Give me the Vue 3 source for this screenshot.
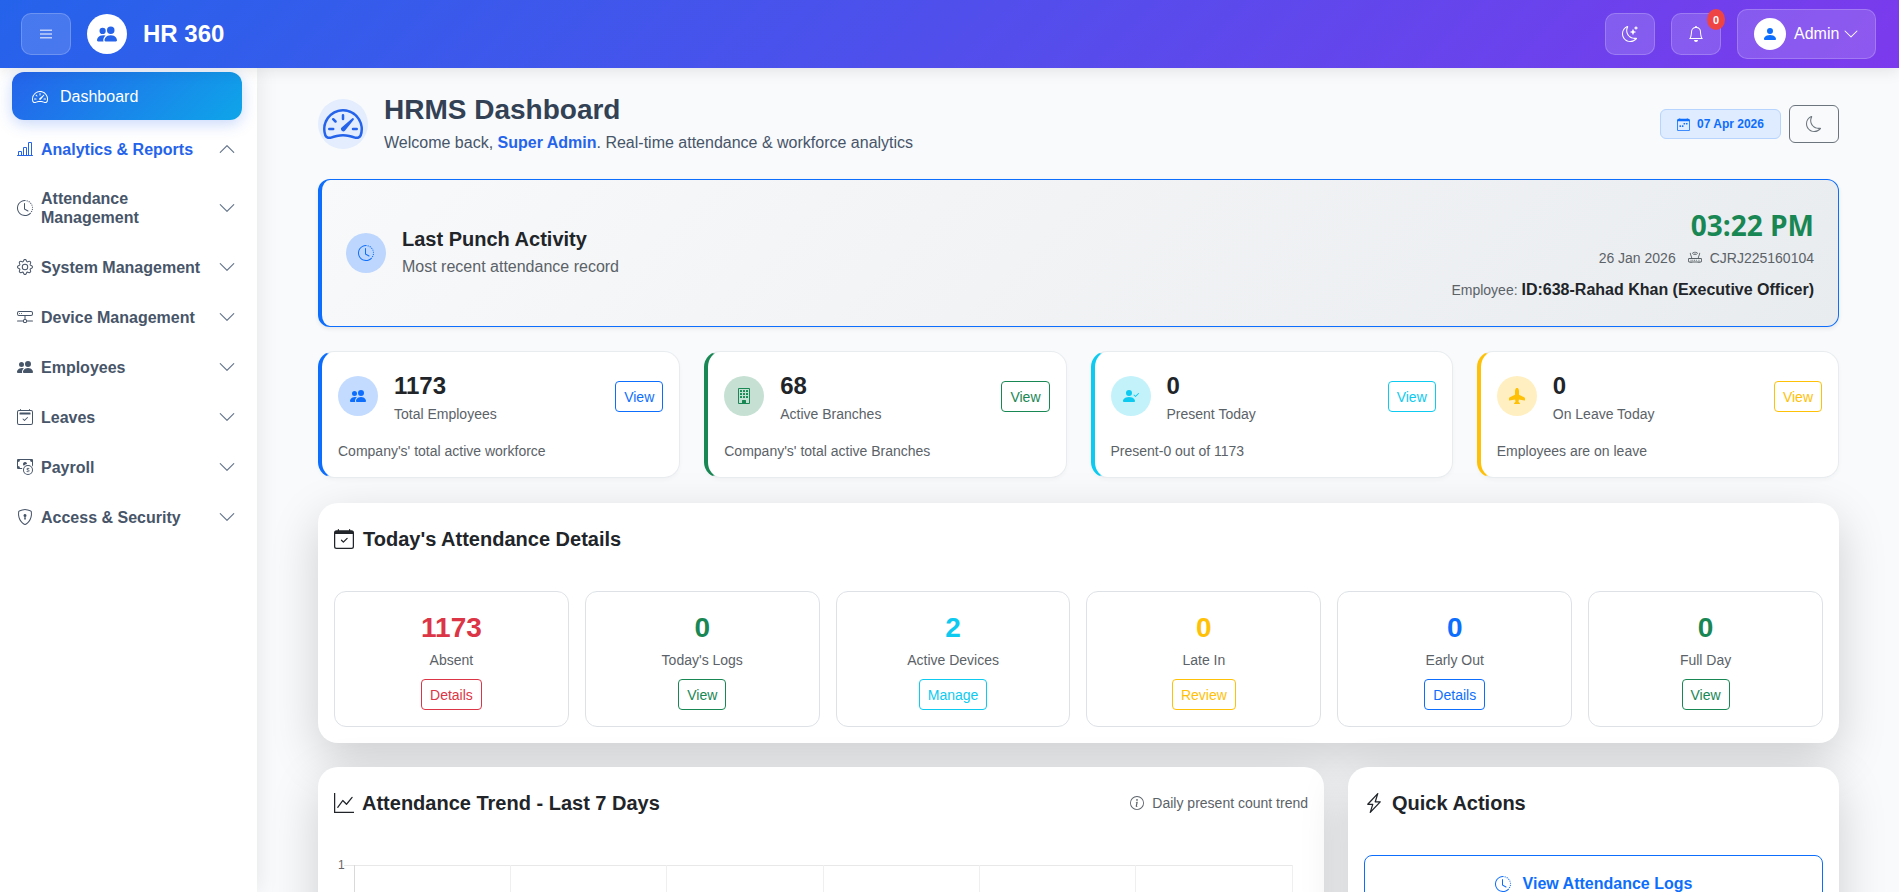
<template>
  <div class="shell">
    <header class="topbar">
      <div class="brand">
        <button class="glass-btn"><BiIcon name="bars" class="ic-16 bars" /></button>
        <span class="logo"><BiIcon name="people" class="ic-20" /></span>
        <span class="brand-name">HR 360</span>
      </div>
      <div class="top-actions">
        <button class="glass-btn"><BiIcon name="moonStars" class="ic-16" /></button>
        <button class="glass-btn bell">
          <BiIcon name="bell" class="ic-16" />
          <span class="badge">0</span>
        </button>
        <button class="glass-btn admin">
          <span class="avatar"><BiIcon name="person" class="ic-16" /></span>
          <span>Admin</span>
          <BiIcon name="chevronDown" class="ic-16 admin-chevron" />
        </button>
      </div>
    </header>

    <div class="body-row">
      <aside class="sidebar">
        <a class="nav-active">
          <BiIcon name="speedometer" class="ic-16" />
          <span>Dashboard</span>
        </a>
        <a v-for="item in menu" :key="item.label" class="nav-item" :class="{ open: item.open }">
          <BiIcon :name="item.icon" class="ic-16" />
          <span class="nav-label">{{ item.label }}</span>
          <BiIcon :name="item.open ? 'chevronUp' : 'chevronDown'" class="ic-18 nav-chevron" />
        </a>
      </aside>

      <main class="content">
        <section class="page-head">
          <div class="page-title">
            <span class="title-circle"><BiIcon name="speedometer" class="ic-40" /></span>
            <div class="title-text">
              <h1>HRMS Dashboard</h1>
              <p>Welcome back, <strong>Super Admin</strong>. Real-time attendance &amp; workforce analytics</p>
            </div>
          </div>
          <div class="page-tools">
            <span class="date-pill"><BiIcon name="calendarWeek" class="ic-12" />07 Apr 2026</span>
            <button class="moon-btn"><BiIcon name="moon" class="ic-16" /></button>
          </div>
        </section>

        <section class="punch">
          <div class="punch-left">
            <span class="circle soft-blue"><BiIcon name="clockHistory" class="ic-16" /></span>
            <div class="title-text">
              <h2>Last Punch Activity</h2>
              <p>Most recent attendance record</p>
            </div>
          </div>
          <div class="punch-right">
            <div class="punch-time">03:22 PM</div>
            <div class="punch-meta">
              <span>26 Jan 2026</span>
              <BiIcon name="router" class="ic-14 router" />
              <span>CJRJ225160104</span>
            </div>
            <div class="punch-emp">Employee: <strong>ID:638-Rahad Khan (Executive Officer)</strong></div>
          </div>
        </section>

        <section class="stats">
          <div v-for="s in stats" :key="s.label" class="stat-card" :class="s.tone">
            <div class="stat-top">
              <span class="circle stat-icon"><BiIcon :name="s.icon" class="ic-16" /></span>
              <div class="stat-text">
                <div class="stat-num">{{ s.value }}</div>
                <div class="stat-label">{{ s.label }}</div>
              </div>
              <button class="btn-line stat-btn">View</button>
            </div>
            <p class="stat-foot">{{ s.foot }}</p>
          </div>
        </section>

        <section class="panel today">
          <h3 class="panel-title"><BiIcon name="calendarCheck" class="ic-20" />Today's Attendance Details</h3>
          <div class="today-grid">
            <div v-for="t in today" :key="t.label" class="today-item" :class="t.tone">
              <div class="today-num">{{ t.value }}</div>
              <div class="today-label">{{ t.label }}</div>
              <button class="btn-line">{{ t.action }}</button>
            </div>
          </div>
        </section>

        <section class="bottom-row">
          <div class="panel trend">
            <div class="trend-head">
              <h3 class="panel-title tight"><BiIcon name="graphUp" class="ic-20" />Attendance Trend - Last 7 Days</h3>
              <span class="trend-note"><BiIcon name="info" class="ic-14" />Daily present count trend</span>
            </div>
            <svg class="trend-chart" viewBox="0 0 974 200" width="974" height="200">
              <text x="4" y="14" class="tick">1</text>
              <line x1="10" y1="10.5" x2="959" y2="10.5" stroke="#e8e8e8" />
              <line
                v-for="(x, i) in gridX"
                :key="x"
                :x1="x"
                y1="10"
                :x2="x"
                y2="200"
                :stroke="i === 0 ? '#d9d9d9' : '#efefef'"
              />
            </svg>
          </div>
          <div class="panel quick">
            <h3 class="panel-title tight"><BiIcon name="lightning" class="ic-20" />Quick Actions</h3>
            <button class="quick-btn"><BiIcon name="clockHistory" class="ic-16" />View Attendance Logs</button>
          </div>
        </section>
      </main>
    </div>
  </div>
</template>

<script setup>
import { h } from 'vue'

const icons = {
  bars: 'M2 3.5h12v1.6H2zM2 7.2h12v1.6H2zM2 10.9h12v1.6H2z',
  people: 'M7 14s-1 0-1-1 1-4 5-4 5 3 5 4-1 1-1 1zm4-6a3 3 0 1 0 0-6 3 3 0 0 0 0 6m-5.784 6A2.24 2.24 0 0 1 5 13c0-1.355.68-2.75 1.936-3.72A6.3 6.3 0 0 0 5 9c-4 0-5 3-5 4s1 1 1 1zM4.5 8a2.5 2.5 0 1 0 0-5 2.5 2.5 0 0 0 0 5',
  speedometer: 'M8 4a.5.5 0 0 1 .5.5V6a.5.5 0 0 1-1 0V4.5A.5.5 0 0 1 8 4M3.732 5.732a.5.5 0 0 1 .707 0l.915.914a.5.5 0 1 1-.708.708l-.914-.915a.5.5 0 0 1 0-.707M2 10a.5.5 0 0 1 .5-.5h1.586a.5.5 0 0 1 0 1H2.5A.5.5 0 0 1 2 10m9.5 0a.5.5 0 0 1 .5-.5h1.5a.5.5 0 0 1 0 1H12a.5.5 0 0 1-.5-.5m.754-4.246a.39.39 0 0 0-.527-.02L7.547 9.31a.91.91 0 1 0 1.302 1.258l3.434-4.297a.39.39 0 0 0-.029-.518zM0 10a8 8 0 1 1 15.547 2.661c-.442 1.253-1.845 1.602-2.932 1.25C11.309 13.488 9.475 13 8 13c-1.474 0-3.31.488-4.615.911-1.087.352-2.49.003-2.932-1.25A8 8 0 0 1 0 10m8-7a7 7 0 0 0-6.603 9.329c.203.575.923.876 1.68.63C4.397 12.533 6.358 12 8 12s3.604.532 4.923.96c.757.245 1.477-.056 1.68-.631A7 7 0 0 0 8 3',
  clockHistory: 'M8.515 1.019A7 7 0 0 0 8 1V0a8 8 0 0 1 .589.022zm2.004.45a7 7 0 0 0-.985-.299l.219-.976q.576.129 1.126.342zm1.37.71a7 7 0 0 0-.439-.27l.493-.87a8 8 0 0 1 .979.654l-.615.789a7 7 0 0 0-.418-.302zm1.834 1.79a7 7 0 0 0-.653-.796l.724-.69q.406.429.747.91zm.744 1.352a7 7 0 0 0-.214-.468l.893-.45a8 8 0 0 1 .45 1.088l-.95.313a7 7 0 0 0-.179-.483m.53 2.507a7 7 0 0 0-.1-1.025l.985-.17q.1.58.116 1.17zm-.131 1.538q.05-.254.081-.51l.993.123a8 8 0 0 1-.23 1.155l-.964-.267q.069-.247.12-.501m-.952 2.379q.276-.436.486-.908l.914.405q-.24.54-.555 1.038zm-.964 1.205q.183-.183.35-.378l.758.653a8 8 0 0 1-.401.432zM8 1a7 7 0 1 0 4.95 11.95l.707.707A8.001 8.001 0 1 1 8 0zM7.5 3a.5.5 0 0 1 .5.5v5.21l3.248 1.856a.5.5 0 0 1-.496.868l-3.5-2A.5.5 0 0 1 7 9V3.5a.5.5 0 0 1 .5-.5',
  barChart: 'M11 2a1 1 0 0 1 1-1h2a1 1 0 0 1 1 1v12h.5a.5.5 0 0 1 0 1H.5a.5.5 0 0 1 0-1H1v-3a1 1 0 0 1 1-1h2a1 1 0 0 1 1 1v3h1V7a1 1 0 0 1 1-1h2a1 1 0 0 1 1 1v7h1zm1 12h2V2h-2zm-3 0V7H7v7zm-5 0v-3H2v3z',
  chevronDown: 'M1.646 4.646a.5.5 0 0 1 .708 0L8 10.293l5.646-5.647a.5.5 0 0 1 .708.708l-6 6a.5.5 0 0 1-.708 0l-6-6a.5.5 0 0 1 0-.708',
  chevronUp: 'M7.646 4.646a.5.5 0 0 1 .708 0l6 6a.5.5 0 0 1-.708.708L8 5.707l-5.646 5.647a.5.5 0 0 1-.708-.708z',
  gear: 'M8 4.754a3.246 3.246 0 1 0 0 6.492 3.246 3.246 0 0 0 0-6.492M5.754 8a2.246 2.246 0 1 1 4.492 0 2.246 2.246 0 0 1-4.492 0M9.796 1.343c-.527-1.79-3.065-1.79-3.592 0l-.094.319a.873.873 0 0 1-1.255.52l-.292-.16c-1.64-.892-3.433.902-2.54 2.541l.159.292a.873.873 0 0 1-.52 1.255l-.319.094c-1.79.527-1.79 3.065 0 3.592l.319.094a.873.873 0 0 1 .52 1.255l-.16.292c-.892 1.64.901 3.434 2.541 2.54l.292-.159a.873.873 0 0 1 1.255.52l.094.319c.527 1.79 3.065 1.79 3.592 0l.094-.319a.873.873 0 0 1 1.255-.52l.292.16c1.64.893 3.434-.902 2.54-2.541l-.159-.292a.873.873 0 0 1 .52-1.255l.319-.094c1.79-.527 1.79-3.065 0-3.592l-.319-.094a.873.873 0 0 1-.52-1.255l.16-.292c.893-1.64-.902-3.433-2.541-2.54l-.292.159a.873.873 0 0 1-1.255-.52zm-2.633.283c.246-.835 1.428-.835 1.674 0l.094.319a1.873 1.873 0 0 0 2.693 1.115l.291-.16c.764-.415 1.6.42 1.184 1.185l-.159.292a1.873 1.873 0 0 0 1.116 2.692l.318.094c.835.246.835 1.428 0 1.674l-.319.094a1.873 1.873 0 0 0-1.115 2.693l.16.291c.415.764-.42 1.6-1.185 1.184l-.291-.159a1.873 1.873 0 0 0-2.693 1.116l-.094.318c-.246.835-1.428.835-1.674 0l-.094-.319a1.873 1.873 0 0 0-2.692-1.115l-.292.16c-.764.415-1.6-.42-1.184-1.185l.159-.291A1.873 1.873 0 0 0 1.945 8.93l-.319-.094c-.835-.246-.835-1.428 0-1.674l.319-.094A1.873 1.873 0 0 0 3.06 4.377l-.16-.292c-.415-.764.42-1.6 1.185-1.184l.292.159a1.873 1.873 0 0 0 2.692-1.115z',
  hddNetwork: 'M4.5 5a.5.5 0 1 0 0-1 .5.5 0 0 0 0 1M3 4.5a.5.5 0 1 1-1 0 .5.5 0 0 1 1 0M0 4a2 2 0 0 1 2-2h12a2 2 0 0 1 2 2v1a2 2 0 0 1-2 2H8.5v3a1.5 1.5 0 0 1 1.5 1.5h5.5a.5.5 0 0 1 0 1H10A1.5 1.5 0 0 1 8.5 14h-1A1.5 1.5 0 0 1 6 12.5H.5a.5.5 0 0 1 0-1H6A1.5 1.5 0 0 1 7.5 10V7H2a2 2 0 0 1-2-2zm1 0v1a1 1 0 0 0 1 1h12a1 1 0 0 0 1-1V4a1 1 0 0 0-1-1H2a1 1 0 0 0-1 1m6 7.5v1a.5.5 0 0 0 .5.5h1a.5.5 0 0 0 .5-.5v-1a.5.5 0 0 0-.5-.5h-1a.5.5 0 0 0-.5.5',
  calendar2Check: 'M10.854 8.146a.5.5 0 0 1 0 .708l-3 3a.5.5 0 0 1-.708 0l-1.5-1.5a.5.5 0 0 1 .708-.708L7.5 10.793l2.646-2.647a.5.5 0 0 1 .708 0M3.5 0a.5.5 0 0 1 .5.5V1h8V.5a.5.5 0 0 1 1 0V1h1a2 2 0 0 1 2 2v11a2 2 0 0 1-2 2H2a2 2 0 0 1-2-2V3a2 2 0 0 1 2-2h1V.5a.5.5 0 0 1 .5-.5M2 2a1 1 0 0 0-1 1v11a1 1 0 0 0 1 1h12a1 1 0 0 0 1-1V3a1 1 0 0 0-1-1zM2.5 4a.5.5 0 0 1 .5-.5h10a.5.5 0 0 1 .5.5v1a.5.5 0 0 1-.5.5H3a.5.5 0 0 1-.5-.5z',
  calendarCheck: 'M10.854 7.146a.5.5 0 0 1 0 .708l-3 3a.5.5 0 0 1-.708 0l-1.5-1.5a.5.5 0 1 1 .708-.708L7.5 9.793l2.646-2.647a.5.5 0 0 1 .708 0M3.5 0a.5.5 0 0 1 .5.5V1h8V.5a.5.5 0 0 1 1 0V1h1a2 2 0 0 1 2 2v11a2 2 0 0 1-2 2H2a2 2 0 0 1-2-2V3a2 2 0 0 1 2-2h1V.5a.5.5 0 0 1 .5-.5M1 4v10a1 1 0 0 0 1 1h12a1 1 0 0 0 1-1V4z',
  calendarWeek: 'M11 6.5a.5.5 0 0 1 .5-.5h1a.5.5 0 0 1 .5.5v1a.5.5 0 0 1-.5.5h-1a.5.5 0 0 1-.5-.5zm-3 0a.5.5 0 0 1 .5-.5h1a.5.5 0 0 1 .5.5v1a.5.5 0 0 1-.5.5h-1a.5.5 0 0 1-.5-.5zm-5 3a.5.5 0 0 1 .5-.5h1a.5.5 0 0 1 .5.5v1a.5.5 0 0 1-.5.5h-1a.5.5 0 0 1-.5-.5zm3 0a.5.5 0 0 1 .5-.5h1a.5.5 0 0 1 .5.5v1a.5.5 0 0 1-.5.5h-1a.5.5 0 0 1-.5-.5zM3.5 0a.5.5 0 0 1 .5.5V1h8V.5a.5.5 0 0 1 1 0V1h1a2 2 0 0 1 2 2v11a2 2 0 0 1-2 2H2a2 2 0 0 1-2-2V3a2 2 0 0 1 2-2h1V.5a.5.5 0 0 1 .5-.5M1 4v10a1 1 0 0 0 1 1h12a1 1 0 0 0 1-1V4z',
  cashCoin: 'M11 15a4 4 0 1 0 0-8 4 4 0 0 0 0 8m5-4a5 5 0 1 1-10 0 5 5 0 0 1 10 0M9.438 11.944c.047.596.518 1.06 1.363 1.116v.44h.375v-.443c.875-.061 1.386-.529 1.386-1.207 0-.618-.39-.936-1.09-1.1l-.296-.07v-1.2c.376.043.614.248.671.532h.658c-.047-.575-.54-1.024-1.329-1.073V8.5h-.375v.45c-.747.073-1.255.522-1.255 1.158 0 .562.378.92 1.007 1.066l.248.061v1.272c-.384-.058-.639-.27-.696-.563h-.668zm1.36-1.354c-.369-.085-.569-.26-.569-.522 0-.294.216-.514.572-.578v1.1zm.432.746c.449.104.655.272.655.569 0 .339-.257.571-.709.614v-1.195zM1 0a1 1 0 0 0-1 1v8a1 1 0 0 0 1 1h4.083q.088-.517.258-1H3a2 2 0 0 0-2-2V3a2 2 0 0 0 2-2h10a2 2 0 0 0 2 2v3.528c.38.34.717.728 1 1.154V1a1 1 0 0 0-1-1zM9.998 5.083 10 5a2 2 0 1 0-3.132 1.65 6 6 0 0 1 3.13-1.567',
  shieldLock: 'M5.338 1.59a61 61 0 0 0-2.837.856.48.48 0 0 0-.328.39c-.554 4.157.726 7.19 2.253 9.188a10.7 10.7 0 0 0 2.287 2.233c.346.244.652.42.893.533q.18.085.293.118a1 1 0 0 0 .101.025 1 1 0 0 0 .1-.025q.114-.034.294-.118c.24-.113.547-.29.893-.533a10.7 10.7 0 0 0 2.287-2.233c1.527-1.997 2.807-5.031 2.253-9.188a.48.48 0 0 0-.328-.39c-.651-.213-1.75-.56-2.837-.855C9.552 1.29 8.531 1.067 8 1.067c-.53 0-1.552.223-2.662.524zM5.072.56C6.157.265 7.31 0 8 0s1.843.265 2.928.56c1.11.3 2.229.655 2.887.87a1.54 1.54 0 0 1 1.044 1.262c.596 4.477-.787 7.795-2.465 9.99a11.8 11.8 0 0 1-2.517 2.453 7 7 0 0 1-1.048.625c-.28.132-.581.24-.829.24s-.548-.108-.829-.24a7 7 0 0 1-1.048-.625 11.8 11.8 0 0 1-2.517-2.453C1.928 10.487.545 7.169 1.141 2.692A1.54 1.54 0 0 1 2.185 1.43 63 63 0 0 1 5.072.56M9.5 6.5a1.5 1.5 0 0 1-1 1.415l.385 1.99a.5.5 0 0 1-.491.595h-.788a.5.5 0 0 1-.49-.595l.384-1.99a1.5 1.5 0 1 1 2-1.415',
  moon: 'M6 .278a.77.77 0 0 1 .08.858 7.2 7.2 0 0 0-.878 3.46c0 4.021 3.278 7.277 7.318 7.277q.792-.001 1.533-.16a.79.79 0 0 1 .81.316.73.73 0 0 1-.031.893A8.35 8.35 0 0 1 8.344 16C3.734 16 0 12.286 0 7.71 0 4.266 2.114 1.312 5.124.06A.75.75 0 0 1 6 .278M4.858 1.311A7.27 7.27 0 0 0 1.025 7.71c0 4.02 3.279 7.276 7.319 7.276a7.32 7.32 0 0 0 5.205-2.162q-.506.063-1.029.063c-4.61 0-8.343-3.714-8.343-8.29 0-1.167.242-2.278.681-3.286',
  moonStars: 'M6 .278a.77.77 0 0 1 .08.858 7.2 7.2 0 0 0-.878 3.46c0 4.021 3.278 7.277 7.318 7.277q.792-.001 1.533-.16a.79.79 0 0 1 .81.316.73.73 0 0 1-.031.893A8.35 8.35 0 0 1 8.344 16C3.734 16 0 12.286 0 7.71 0 4.266 2.114 1.312 5.124.06A.75.75 0 0 1 6 .278M4.858 1.311A7.27 7.27 0 0 0 1.025 7.71c0 4.02 3.279 7.276 7.319 7.276a7.32 7.32 0 0 0 5.205-2.162q-.506.063-1.029.063c-4.61 0-8.343-3.714-8.343-8.29 0-1.167.242-2.278.681-3.286M10.794 3.148a.217.217 0 0 1 .412 0l.387 1.162c.173.518.579.924 1.097 1.097l1.162.387a.217.217 0 0 1 0 .412l-1.162.387a1.73 1.73 0 0 0-1.097 1.097l-.387 1.162a.217.217 0 0 1-.412 0l-.387-1.162A1.73 1.73 0 0 0 9.31 6.593l-1.162-.387a.217.217 0 0 1 0-.412l1.162-.387a1.73 1.73 0 0 0 1.097-1.097zM13.863.099a.145.145 0 0 1 .274 0l.258.774c.115.346.386.617.732.732l.774.258a.145.145 0 0 1 0 .274l-.774.258a1.16 1.16 0 0 0-.732.732l-.258.774a.145.145 0 0 1-.274 0l-.258-.774a1.16 1.16 0 0 0-.732-.732l-.774-.258a.145.145 0 0 1 0-.274l.774-.258c.346-.115.617-.386.732-.732z',
  bell: 'M8 16a2 2 0 0 0 2-2H6a2 2 0 0 0 2 2M8 1.918l-.797.161A4 4 0 0 0 4 6c0 .628-.134 2.197-.459 3.742-.16.767-.376 1.566-.663 2.258h10.244c-.287-.692-.502-1.49-.663-2.258C12.134 8.197 12 6.628 12 6a4 4 0 0 0-3.203-3.92zM14.22 12c.223.447.481.801.78 1H1c.299-.199.557-.553.78-1C2.68 10.2 3 6.88 3 6c0-2.42 1.72-4.44 4.005-4.901a1 1 0 1 1 1.99 0A5 5 0 0 1 13 6c0 .88.32 4.2 1.22 6',
  person: 'M3 14s-1 0-1-1 1-4 6-4 6 3 6 4-1 1-1 1zm5-6a3 3 0 1 0 0-6 3 3 0 0 0 0 6',
  router: 'M5.525 3.025a3.5 3.5 0 0 1 4.95 0 .5.5 0 1 0 .707-.707 4.5 4.5 0 0 0-6.364 0 .5.5 0 0 0 .707.707M6.94 4.44a1.5 1.5 0 0 1 2.12 0 .5.5 0 0 0 .708-.708 2.5 2.5 0 0 0-3.536 0 .5.5 0 0 0 .707.707M2.974 2.342a.5.5 0 1 0-.948.316L3.806 8H1.5A1.5 1.5 0 0 0 0 9.5v2A1.5 1.5 0 0 0 1.5 13H2a.5.5 0 0 0 .5.5h2A.5.5 0 0 0 5 13h6a.5.5 0 0 0 .5.5h2a.5.5 0 0 0 .5-.5h.5a1.5 1.5 0 0 0 1.5-1.5v-2A1.5 1.5 0 0 0 14.5 8h-2.306l1.78-5.342a.5.5 0 1 0-.948-.316L11.14 8H4.86zM1.5 9h13a.5.5 0 0 1 .5.5v2a.5.5 0 0 1-.5.5h-13a.5.5 0 0 1-.5-.5v-2a.5.5 0 0 1 .5-.5M3 10h1v1H3zM5 10h1v1H5zM7 10h1v1H7zM9 10h1v1H9zM12 10h1v1h-1z',
  building: 'M4 2.5a.5.5 0 0 1 .5-.5h1a.5.5 0 0 1 .5.5v1a.5.5 0 0 1-.5.5h-1a.5.5 0 0 1-.5-.5zm3 0a.5.5 0 0 1 .5-.5h1a.5.5 0 0 1 .5.5v1a.5.5 0 0 1-.5.5h-1a.5.5 0 0 1-.5-.5zm3.5-.5a.5.5 0 0 0-.5.5v1a.5.5 0 0 0 .5.5h1a.5.5 0 0 0 .5-.5v-1a.5.5 0 0 0-.5-.5zM4 5.5a.5.5 0 0 1 .5-.5h1a.5.5 0 0 1 .5.5v1a.5.5 0 0 1-.5.5h-1a.5.5 0 0 1-.5-.5zM7.5 5a.5.5 0 0 0-.5.5v1a.5.5 0 0 0 .5.5h1a.5.5 0 0 0 .5-.5v-1a.5.5 0 0 0-.5-.5zm2.5.5a.5.5 0 0 1 .5-.5h1a.5.5 0 0 1 .5.5v1a.5.5 0 0 1-.5.5h-1a.5.5 0 0 1-.5-.5zM4.5 8a.5.5 0 0 0-.5.5v1a.5.5 0 0 0 .5.5h1a.5.5 0 0 0 .5-.5v-1a.5.5 0 0 0-.5-.5zm2.5.5a.5.5 0 0 1 .5-.5h1a.5.5 0 0 1 .5.5v1a.5.5 0 0 1-.5.5h-1a.5.5 0 0 1-.5-.5zm3.5-.5a.5.5 0 0 0-.5.5v1a.5.5 0 0 0 .5.5h1a.5.5 0 0 0 .5-.5v-1a.5.5 0 0 0-.5-.5zM2 1a1 1 0 0 1 1-1h10a1 1 0 0 1 1 1v14a1 1 0 0 1-1 1H3a1 1 0 0 1-1-1zm11 0H3v14h3v-2.5a.5.5 0 0 1 .5-.5h3a.5.5 0 0 1 .5.5V15h3z',
  personCheck: 'M15.854 5.146a.5.5 0 0 1 0 .708l-3 3a.5.5 0 0 1-.708 0l-1.5-1.5a.5.5 0 0 1 .708-.708L12.5 7.793l2.646-2.647a.5.5 0 0 1 .708 0M1 14s-1 0-1-1 1-4 6-4 6 3 6 4-1 1-1 1zm5-6a3 3 0 1 0 0-6 3 3 0 0 0 0 6',
  airplane: 'M6.428 1.151C6.708.591 7.213 0 8 0s1.292.592 1.572 1.151C9.861 1.73 10 2.431 10 3v3.691l5.17 2.585a1.5 1.5 0 0 1 .83 1.342V12a.5.5 0 0 1-.582.493l-5.507-.918-.375 2.253 1.318 1.318A.5.5 0 0 1 10.5 16h-5a.5.5 0 0 1-.354-.854l1.319-1.318-.376-2.253-5.507.918A.5.5 0 0 1 0 12v-1.382a1.5 1.5 0 0 1 .83-1.342L6 6.691V3c0-.568.14-1.271.428-1.849',
  graphUp: 'M0 0h1v15h15v1H0zm14.817 3.113a.5.5 0 0 1 .07.704l-4.5 5.5a.5.5 0 0 1-.74.037L7.06 6.767l-3.656 5.027a.5.5 0 0 1-.808-.588l4-5.5a.5.5 0 0 1 .758-.06l2.609 2.61 4.15-5.073a.5.5 0 0 1 .704-.07',
  info: 'M8 15A7 7 0 1 1 8 1a7 7 0 0 1 0 14m0 1A8 8 0 1 0 8 0a8 8 0 0 0 0 16M8.93 6.588l-2.29.287-.082.38.45.083c.294.07.352.176.288.469l-.738 3.468c-.194.897.105 1.319.808 1.319.545 0 1.178-.252 1.465-.598l.088-.42c-.2.176-.492.246-.686.246-.275 0-.375-.193-.304-.533zM9 4.5a1 1 0 1 1-2 0 1 1 0 0 1 2 0',
  lightning: 'M11.251.068a.5.5 0 0 1 .227.58L9.677 6.5H13a.5.5 0 0 1 .364.843l-8 8.5a.5.5 0 0 1-.842-.49L6.323 9.5H3a.5.5 0 0 1-.364-.843l8-8.5a.5.5 0 0 1 .615-.09zM4.157 8.5H7a.5.5 0 0 1 .478.647L6.11 13.59l5.732-6.09H9a.5.5 0 0 1-.478-.647L9.89 2.41z',
}

const evenOdd = ['cashCoin', 'router']

const BiIcon = (props) =>
  h('svg', { viewBox: '0 0 16 16', fill: 'currentColor', 'aria-hidden': 'true' }, [
    h('path', { d: icons[props.name], 'fill-rule': evenOdd.includes(props.name) ? 'evenodd' : 'nonzero' }),
  ])
BiIcon.props = ['name']

const menu = [
  { label: 'Analytics & Reports', icon: 'barChart', open: true },
  { label: 'Attendance Management', icon: 'clockHistory' },
  { label: 'System Management', icon: 'gear' },
  { label: 'Device Management', icon: 'hddNetwork' },
  { label: 'Employees', icon: 'people' },
  { label: 'Leaves', icon: 'calendar2Check' },
  { label: 'Payroll', icon: 'cashCoin' },
  { label: 'Access & Security', icon: 'shieldLock' },
]

const stats = [
  { value: 1173, label: 'Total Employees', foot: "Company's' total active workforce", icon: 'people', tone: 'blue' },
  { value: 68, label: 'Active Branches', foot: "Company's' total active Branches", icon: 'building', tone: 'green' },
  { value: 0, label: 'Present Today', foot: 'Present-0 out of 1173', icon: 'personCheck', tone: 'cyan' },
  { value: 0, label: 'On Leave Today', foot: 'Employees are on leave', icon: 'airplane', tone: 'yellow' },
]

const today = [
  { value: 1173, label: 'Absent', action: 'Details', tone: 'red' },
  { value: 0, label: "Today's Logs", action: 'View', tone: 'green' },
  { value: 2, label: 'Active Devices', action: 'Manage', tone: 'cyan' },
  { value: 0, label: 'Late In', action: 'Review', tone: 'yellow' },
  { value: 0, label: 'Early Out', action: 'Details', tone: 'blue' },
  { value: 0, label: 'Full Day', action: 'View', tone: 'green' },
]

const gridX = [20.5, 176.5, 332.5, 489.5, 645.5, 801.5, 958.5]
</script>

<style>
html,
body {
  margin: 0;
  overflow: hidden;
}
</style>

<style scoped>
* {
  box-sizing: border-box;
}

.shell {
  height: 100vh;
  display: flex;
  flex-direction: column;
  overflow: hidden;
  font-family: "Liberation Sans", Arial, sans-serif;
  color: #212529;
  background: #f8fafc;
}

svg {
  display: block;
  flex: none;
}
.ic-12 { width: 13px; height: 13px; }
.ic-14 { width: 14px; height: 14px; }
.ic-16 { width: 16px; height: 16px; }
.ic-18 { width: 18px; height: 18px; }
.ic-20 { width: 20px; height: 20px; }
.ic-40 { width: 40px; height: 40px; }

button {
  font-family: inherit;
  cursor: pointer;
}

/* top bar */
.topbar {
  height: 68px;
  flex: none;
  display: flex;
  align-items: center;
  justify-content: space-between;
  padding: 0 23px 0 21px;
  background: linear-gradient(135deg, #2563eb 0%, #7c3aed 100%);
  box-shadow: 0 2px 15px rgba(0, 0, 0, 0.1);
  position: relative;
  z-index: 3;
}

.brand,
.top-actions {
  display: flex;
  align-items: center;
}
.top-actions {
  gap: 16px;
}

.glass-btn {
  width: 50px;
  height: 42px;
  display: flex;
  align-items: center;
  justify-content: center;
  color: #fff;
  background: rgba(255, 255, 255, 0.15);
  border: 1px solid rgba(255, 255, 255, 0.2);
  border-radius: 10px;
  padding: 0;
}
.bars {
  opacity: 0.65;
}

.logo {
  width: 40px;
  height: 40px;
  margin-left: 16px;
  border-radius: 50%;
  background: #fff;
  color: #2563eb;
  display: flex;
  align-items: center;
  justify-content: center;
}

.brand-name {
  margin-left: 16px;
  color: #fff;
  font-size: 24px;
  font-weight: 700;
}

.bell {
  position: relative;
}
.badge {
  position: absolute;
  top: -5px;
  right: -5px;
  width: 18px;
  height: 21px;
  border-radius: 50%;
  background: #ef4444;
  color: #fff;
  font-size: 11px;
  font-weight: 700;
  display: flex;
  align-items: center;
  justify-content: center;
}

.admin {
  width: 139px;
  height: 50px;
  justify-content: flex-start;
  padding-left: 16px;
  gap: 8px;
  font-size: 16px;
}
.admin-chevron {
  margin-left: -4px;
}
.avatar {
  width: 32px;
  height: 32px;
  border-radius: 50%;
  background: #fff;
  color: #0d6efd;
  display: flex;
  align-items: center;
  justify-content: center;
}

/* sidebar */
.body-row {
  flex: 1;
  min-height: 0;
  display: flex;
}

.sidebar {
  width: 257px;
  flex: none;
  background: #fff;
  box-shadow: 2px 0 20px rgba(0, 0, 0, 0.08);
  padding: 4px 21px 0 12px;
  position: relative;
  z-index: 2;
}

.nav-active {
  height: 48px;
  width: 230px;
  margin-bottom: 4px;
  padding: 1px 0 0 20px;
  display: flex;
  align-items: center;
  gap: 12px;
  border-radius: 12px;
  color: #fff;
  font-size: 16px;
  background: linear-gradient(135deg, #2563eb, #0ea5e9);
  box-shadow: 0 4px 15px rgba(37, 99, 235, 0.25);
}

.nav-item {
  min-height: 50px;
  display: flex;
  align-items: center;
  gap: 8px;
  padding: 15px 0 15px 5px;
  font-size: 16px;
  line-height: 19px;
  font-weight: 700;
  color: #475569;
}
.nav-item.open {
  color: #2563eb;
}
.nav-label {
  flex: 1;
  padding-right: 8px;
}
.nav-chevron {
  color: #64748b;
}

/* page */
.content {
  flex: 1;
  min-width: 0;
  padding: 31px 60px 0 61px;
}

.page-head {
  height: 50px;
  display: flex;
  align-items: center;
  justify-content: space-between;
  margin-bottom: 30px;
}
.page-title {
  display: flex;
  align-items: center;
  gap: 16px;
}
.title-text {
  padding-bottom: 3px;
}
.title-circle {
  width: 50px;
  height: 50px;
  border-radius: 50%;
  background: #e3edfd;
  color: #2563eb;
  display: flex;
  align-items: center;
  justify-content: center;
}
h1 {
  margin: 0 0 6px;
  font-size: 28px;
  line-height: 34px;
  font-weight: 700;
  color: #334155;
}
.page-title p {
  margin: 0;
  font-size: 16px;
  line-height: 20px;
  color: #475569;
}
.page-title strong {
  color: #2563eb;
}

.page-tools {
  display: flex;
  align-items: center;
  gap: 8px;
}
.date-pill {
  width: 121px;
  height: 30px;
  display: flex;
  align-items: center;
  justify-content: center;
  gap: 7px;
  border-radius: 6px;
  border: 1px solid #b6d4fe;
  background: #dfebff;
  color: #0d6efd;
  font-size: 12px;
  font-weight: 700;
}
.moon-btn {
  width: 50px;
  height: 38px;
  display: flex;
  align-items: center;
  justify-content: center;
  background: transparent;
  border: 1px solid #6c757d;
  border-radius: 6px;
  color: #6c757d;
  padding: 0;
}

/* punch card */
.punch {
  height: 148px;
  display: flex;
  align-items: center;
  justify-content: space-between;
  padding: 0 24px;
  border: 1px solid #0d6efd;
  border-left-width: 4px;
  border-radius: 12px;
  background: linear-gradient(135deg, #f8f9fa, #e9ecef);
  box-shadow: 0 2px 4px rgba(0, 0, 0, 0.075);
  margin-bottom: 24px;
}
.punch-left {
  display: flex;
  align-items: center;
  gap: 16px;
}
.circle {
  width: 40px;
  height: 40px;
  border-radius: 50%;
  display: flex;
  align-items: center;
  justify-content: center;
  flex: none;
}
.soft-blue {
  background: #bdd6fd;
  color: #0d6efd;
}
.punch-left h2 {
  margin: 0 0 6px;
  font-size: 20px;
  line-height: 24px;
  font-weight: 700;
}
.punch-left p {
  margin: 0;
  font-size: 16px;
  line-height: 20px;
  color: #5b6268;
}
.punch-right {
  text-align: right;
}
.punch-time {
  font-family: "Open Sans", "Noto Sans", sans-serif;
  font-size: 28px;
  line-height: 38px;
  font-weight: 700;
  color: #198754;
}
.punch-meta {
  display: flex;
  align-items: center;
  justify-content: flex-end;
  margin-top: 4px;
  font-size: 14px;
  line-height: 20px;
  color: #5b6268;
}
.router {
  margin: 0 8px 0 12px;
}
.punch-emp {
  margin-top: 11px;
  font-size: 14px;
  line-height: 22px;
  color: #5b6268;
}
.punch-emp strong {
  font-size: 16px;
  color: #212529;
}

/* tone */
.blue { --tone: #0d6efd; --soft: #c3dbfe; }
.green { --tone: #198754; --soft: #c6e1d4; }
.cyan { --tone: #0dcaf0; --soft: #c3f2fb; }
.yellow { --tone: #ffc107; --soft: #ffefc1; }
.red { --tone: #dc3545; --soft: #f7ccd1; }

.btn-line {
  height: 31px;
  padding: 0 8px;
  border: 1px solid var(--tone);
  border-radius: 4px;
  background: transparent;
  color: var(--tone);
  font-size: 14px;
}

/* stat cards */
.stats {
  display: grid;
  grid-template-columns: repeat(4, 1fr);
  gap: 24px;
  margin-bottom: 25px;
}
.stat-card {
  height: 127px;
  padding: 19px 16px 0;
  background: #fff;
  border: 1px solid #e9ecef;
  border-left: 4px solid var(--tone);
  border-radius: 16px;
  box-shadow: 0 2px 4px rgba(0, 0, 0, 0.03);
}
.stat-top {
  display: flex;
  align-items: flex-start;
}
.stat-icon {
  margin-top: 5px;
  background: var(--soft);
  color: var(--tone);
}
.stat-text {
  flex: 1;
  margin-left: 16px;
}
.stat-num {
  font-size: 24px;
  line-height: 29px;
  font-weight: 700;
}
.stat-label {
  margin-top: 4px;
  font-size: 14px;
  line-height: 21px;
  color: #5b6268;
}
.stat-btn {
  margin-top: 10px;
}
.stat-foot {
  margin: 16px 0 0;
  font-size: 14px;
  line-height: 21px;
  color: #5b6268;
}

/* panels */
.panel {
  background: #fff;
  border-radius: 20px;
  box-shadow: 0 16px 48px rgba(0, 0, 0, 0.175);
  padding: 21px 16px 16px;
}
.panel-title {
  margin: 0;
  height: 30px;
  display: flex;
  align-items: center;
  gap: 9px;
  font-size: 20px;
  font-weight: 700;
  color: #212529;
}
.panel-title.tight {
  gap: 8px;
}

.today {
  margin-bottom: 24px;
}
.today-grid {
  margin-top: 37px;
  display: grid;
  grid-template-columns: repeat(6, 1fr);
  gap: 16px;
}
.today-item {
  height: 136px;
  padding-top: 19px;
  display: flex;
  flex-direction: column;
  align-items: center;
  border: 1px solid #dee2e6;
  border-radius: 12px;
}
.today-num {
  font-size: 28px;
  line-height: 34px;
  font-weight: 700;
  color: var(--tone);
}
.today-label {
  margin: 5px 0 8px;
  font-size: 14px;
  line-height: 21px;
  color: #5b6268;
}

.bottom-row {
  display: grid;
  grid-template-columns: 1006px 1fr;
  gap: 24px;
}
.trend-head {
  display: flex;
  align-items: center;
  justify-content: space-between;
}
.trend-note {
  display: flex;
  align-items: center;
  gap: 8px;
  font-size: 14px;
  color: #5b6268;
}
.trend-chart {
  margin-top: 37px;
}
.tick {
  font-size: 12px;
  fill: #666;
  font-family: "Liberation Sans", Arial, sans-serif;
}

.quick-btn {
  width: 100%;
  height: 58px;
  margin-top: 37px;
  display: flex;
  align-items: center;
  justify-content: center;
  gap: 12px;
  border: 1px solid #0d6efd;
  border-radius: 8px;
  background: transparent;
  color: #0d6efd;
  font-size: 16px;
  font-weight: 700;
}
</style>
